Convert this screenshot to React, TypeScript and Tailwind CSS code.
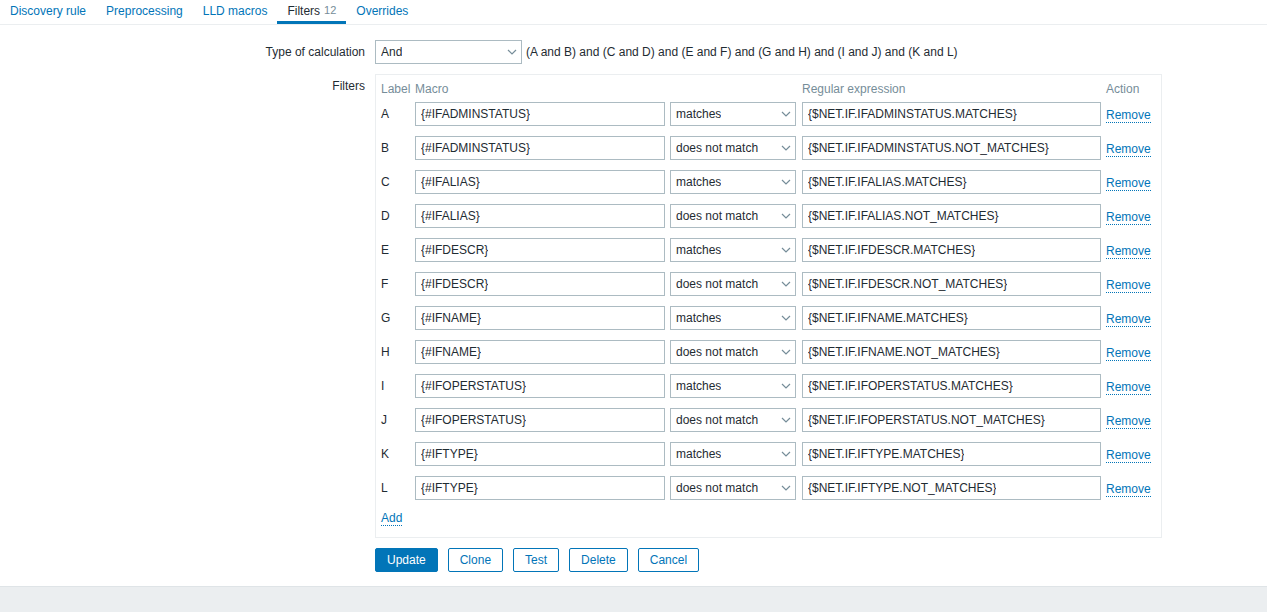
import React from "react";

const tabs = [
  { name: "Discovery rule" },
  { name: "Preprocessing" },
  { name: "LLD macros" },
  { name: "Filters", count: "12", active: true },
  { name: "Overrides" },
];

const filters = [
  ["A", "{#IFADMINSTATUS}", "matches", "{$NET.IF.IFADMINSTATUS.MATCHES}"],
  ["B", "{#IFADMINSTATUS}", "does not match", "{$NET.IF.IFADMINSTATUS.NOT_MATCHES}"],
  ["C", "{#IFALIAS}", "matches", "{$NET.IF.IFALIAS.MATCHES}"],
  ["D", "{#IFALIAS}", "does not match", "{$NET.IF.IFALIAS.NOT_MATCHES}"],
  ["E", "{#IFDESCR}", "matches", "{$NET.IF.IFDESCR.MATCHES}"],
  ["F", "{#IFDESCR}", "does not match", "{$NET.IF.IFDESCR.NOT_MATCHES}"],
  ["G", "{#IFNAME}", "matches", "{$NET.IF.IFNAME.MATCHES}"],
  ["H", "{#IFNAME}", "does not match", "{$NET.IF.IFNAME.NOT_MATCHES}"],
  ["I", "{#IFOPERSTATUS}", "matches", "{$NET.IF.IFOPERSTATUS.MATCHES}"],
  ["J", "{#IFOPERSTATUS}", "does not match", "{$NET.IF.IFOPERSTATUS.NOT_MATCHES}"],
  ["K", "{#IFTYPE}", "matches", "{$NET.IF.IFTYPE.MATCHES}"],
  ["L", "{#IFTYPE}", "does not match", "{$NET.IF.IFTYPE.NOT_MATCHES}"],
];

function Chevron() {
  return (
    <svg width="10" height="6" viewBox="0 0 10 6" className="shrink-0">
      <path d="M1 1 L5 5 L9 1" fill="none" stroke="#768d99" strokeWidth="1.2" />
    </svg>
  );
}

function FakeSelect({ value, width }: { value: string; width: string }) {
  return (
    <div
      className={`${width} h-[24px] border border-[#acbbc2] bg-white flex items-center justify-between pl-[5px] pr-[4px] shrink-0`}
    >
      <span className="truncate">{value}</span>
      <Chevron />
    </div>
  );
}

function TextBox({ value, width }: { value: string; width: string }) {
  return (
    <div className={`${width} h-[24px] border border-[#acbbc2] bg-white flex items-center px-[5px] shrink-0`}>
      <span className="truncate">{value}</span>
    </div>
  );
}

export default function App() {
  return (
    <div
      className="w-[1267px] h-[612px] bg-white text-[12px] text-[#1f2c33] flex flex-col overflow-hidden"
      style={{ fontFamily: '"Liberation Sans", Arial, sans-serif' }}
    >
      {/* Tabs */}
      <div className="flex h-[25px] border-b border-[#ebeef0] shrink-0">
        {tabs.map((t) => (
          <div
            key={t.name}
            className={`px-[10px] h-[24px] flex items-start pt-[2px] ${
              t.active ? "border-b-[3px] border-[#0275b8] text-[#1f2c33]" : "text-[#0275b8]"
            }`}
          >
            <span>{t.name}</span>
            {t.count && <span className="ml-[4px] text-[11px] text-[#768d99] leading-[16px]">{t.count}</span>}
          </div>
        ))}
      </div>

      {/* Form */}
      <div className="flex-1 pt-[15px]">
        <div className="flex items-center">
          <div className="w-[365px] text-right">Type of calculation</div>
          <div className="ml-[10px] flex items-center">
            <FakeSelect value="And" width="w-[147px]" />
            <span className="ml-[4px]">
              (A and B) and (C and D) and (E and F) and (G and H) and (I and J) and (K and L)
            </span>
          </div>
        </div>

        <div className="flex mt-[10px]">
          <div className="w-[365px] text-right pt-[3px]">Filters</div>
          <div className="ml-[10px] w-[787px] border border-[#ebeef0] px-[5px] pt-[5px] pb-[10px]">
            <div className="flex h-[17px] items-center text-[#768d99]">
              <div className="w-[34px]">Label</div>
              <div className="w-[387px]">Macro</div>
              <div className="w-[304px]">Regular expression</div>
              <div>Action</div>
            </div>
            <div className="flex flex-col gap-[10px] mt-[5px]">
              {filters.map(([label, macro, op, regex]) => (
                <div key={label} className="flex items-center h-[24px]">
                  <div className="w-[34px]">{label}</div>
                  <TextBox value={macro} width="w-[250px]" />
                  <div className="ml-[5px]">
                    <FakeSelect value={op} width="w-[126px]" />
                  </div>
                  <div className="ml-[6px]">
                    <TextBox value={regex} width="w-[299px]" />
                  </div>
                  <span className="ml-[5px] mt-[2px] text-[#0275b8] border-b border-dotted border-[#0275b8] leading-[14px]">
                    Remove
                  </span>
                </div>
              ))}
            </div>
            <div className="mt-[10px] h-[17px] flex items-center">
              <span className="text-[#0275b8] border-b border-dotted border-[#0275b8] leading-[14px]">Add</span>
            </div>
          </div>
        </div>

        <div className="flex mt-[10px] ml-[375px] gap-[10px]">
          <button className="h-[24px] px-[11px] bg-[#0275b8] border border-[#0275b8] text-white rounded-[2px]">
            Update
          </button>
          {["Clone", "Test", "Delete", "Cancel"].map((b) => (
            <button
              key={b}
              className="h-[24px] px-[11px] bg-white border border-[#0275b8] text-[#0275b8] rounded-[2px]"
            >
              {b}
            </button>
          ))}
        </div>
      </div>

      {/* Footer */}
      <div className="h-[26px] bg-[#ebeef0] border-t border-[#dfe4e7] shrink-0" />
    </div>
  );
}
